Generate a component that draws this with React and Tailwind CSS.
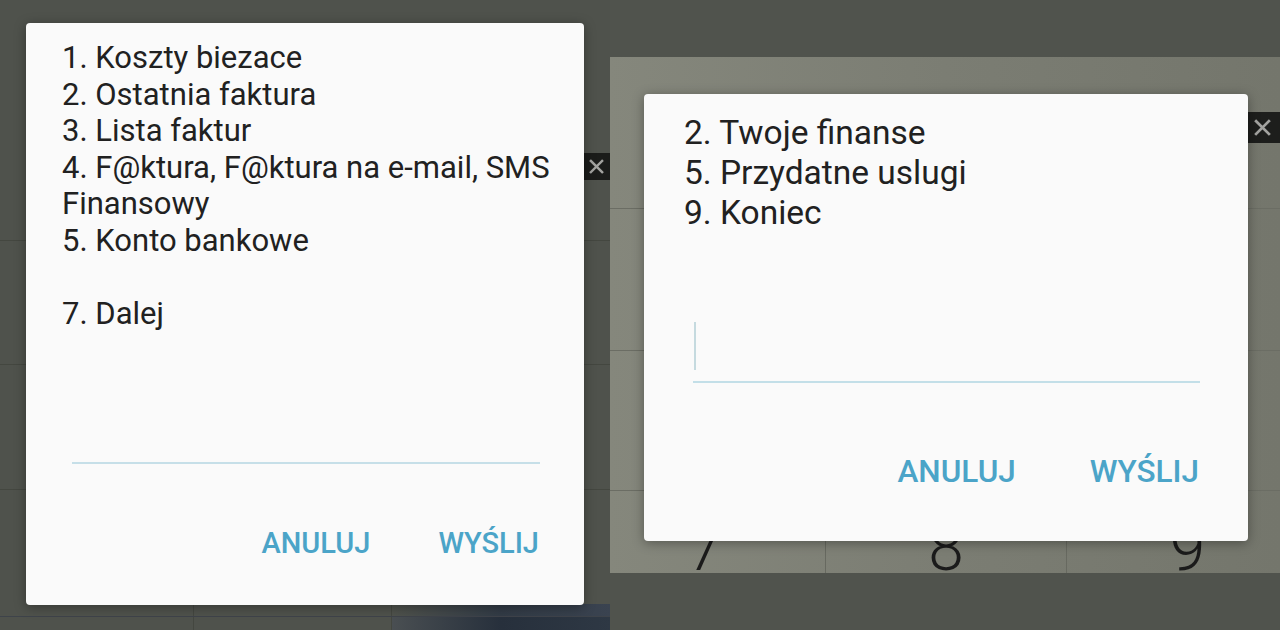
import React from 'react';

const leftLines = [
  '1. Koszty biezace',
  '2. Ostatnia faktura',
  '3. Lista faktur',
  '4. F@ktura, F@ktura na e-mail, SMS',
  'Finansowy',
  '5. Konto bankowe',
  '\u00a0',
  '7. Dalej',
];

const rightLines = ['2. Twoje finanse', '5. Przydatne uslugi', '9. Koniec'];

function CloseGlyph({ size = 16 }) {
  return (
    <svg width={size} height={size} viewBox="0 0 16 16" fill="none">
      <path d="M2 2L14 14M14 2L2 14" stroke="#a3a3a0" strokeWidth="2.6" strokeLinecap="square" />
    </svg>
  );
}

function LeftScreen() {
  return (
    <div className="relative w-[610px] h-full shrink-0 bg-[#4f524c] overflow-hidden">
      {/* dimmed screen behind the dialog */}
      <div className="flex flex-col h-full">
        <div className="h-[241px] border-b border-[#444740]" />
        <div className="h-[124px] border-b border-[#444740]" />
        <div className="h-[125px] border-b border-[#444740]" />
        <div className="h-[127px] border-b border-[#3e434a] flex flex-col justify-end">
          <div className="h-[12px] flex">
            <div className="w-[194px] border-r border-[#444740]" />
            <div className="w-[198px] border-r border-[#444740]" />
            <div className="flex-1 bg-linear-to-r from-[#4f524c] via-[#323b46] to-[#3a4350]" />
          </div>
        </div>
        <div className="flex-1 flex">
          <div className="w-[194px] border-r border-[#444740]" />
          <div className="w-[198px] border-r border-[#444740]" />
          <div className="flex-1 bg-linear-to-r from-[#4a4f52] via-[#27303c] to-[#2e3844]" />
        </div>
      </div>

      <div className="absolute left-[582px] top-[153px] w-[28px] h-[27px] bg-[#1b1c1a] flex items-center justify-center">
        <CloseGlyph size={15} />
      </div>

      {/* dialog */}
      <div className="absolute z-10 left-[26px] top-[23px] w-[558px] h-[582px] bg-[#fafafa] rounded-[4px] shadow-[0_2px_12px_rgba(0,0,0,0.35)] flex flex-col">
        <div className="pl-[36px] pt-[17px] text-[31px] leading-[36.5px] text-[#212121]">
          {leftLines.map((l, i) => (
            <div key={i} className="whitespace-nowrap">{l}</div>
          ))}
        </div>
        <div className="mt-[130px] ml-[46px] mr-[44px] h-[2px] bg-[#c6dfe8]" />
        <div className="mt-[62px] pr-[45px] flex justify-end gap-[68px] text-[29px] leading-[34px] font-medium text-[#4ba4c8]">
          <span>ANULUJ</span>
          <span>WYŚLIJ</span>
        </div>
      </div>
    </div>
  );
}

function RightScreen() {
  return (
    <div className="relative flex-1 h-full bg-[#50534d] overflow-hidden">
      <div className="flex flex-col h-full">
        <div className="h-[57px]" />
        <div className="h-[516px] flex flex-col bg-linear-to-r from-[#85877c] via-[#7b7d73] to-[#74766c]">
          <div className="h-[152px] border-b border-[#6b6d64]" />
          <div className="h-[142px] border-b border-[#6b6d64]" />
          <div className="h-[140px] border-b border-[#6b6d64]" />
          <div className="flex-1 overflow-hidden">
            <div className="ml-[-25px] w-[723px] h-full grid grid-cols-3">
              {['7', '8', '9'].map((d, i) => (
                <div
                  key={d}
                  className={`flex items-end justify-center ${i < 2 ? 'border-r border-[#676960]' : ''}`}
                >
                  <span className="text-[64px] leading-none font-light text-[#1b1b1b] mb-[-8px]">{d}</span>
                </div>
              ))}
            </div>
          </div>
        </div>
        <div className="flex-1" />
      </div>

      <div className="absolute left-[620px] top-[112px] w-[56px] h-[31px] rounded-[6px] bg-[#1d1e1c] flex items-center pl-[24px]">
        <CloseGlyph size={17} />
      </div>

      {/* dialog */}
      <div className="absolute z-10 left-[34px] top-[94px] w-[604px] h-[447px] bg-[#fafafa] rounded-[4px] shadow-[0_2px_12px_rgba(0,0,0,0.35)] flex flex-col">
        <div className="pl-[40px] pt-[19px] text-[33.5px] leading-[40px] text-[#212121]">
          {rightLines.map((l) => (
            <div key={l} className="whitespace-nowrap">{l}</div>
          ))}
        </div>
        <div className="mt-[79px] ml-[49px] mr-[48px] h-[71px] pt-[10px] border-b-2 border-[#c3dfe8]">
          <div className="ml-[1px] w-[2px] h-[48px] bg-[#c5dadf]" />
        </div>
        <div className="mt-[71px] pr-[49px] flex justify-end gap-[74px] text-[31.5px] leading-[36px] font-medium text-[#4ba4c8]">
          <span>ANULUJ</span>
          <span>WYŚLIJ</span>
        </div>
      </div>
    </div>
  );
}

export default function App() {
  return (
    <div className="flex w-[1280px] h-[630px] overflow-hidden font-[Roboto,sans-serif]">
      <LeftScreen />
      <RightScreen />
    </div>
  );
}
